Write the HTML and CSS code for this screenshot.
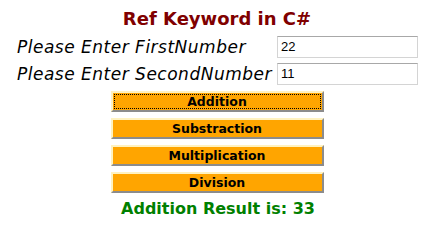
FILE: index.html
```html
<!DOCTYPE html>
<html>
<head>
<meta charset="utf-8">
<link rel="stylesheet" href="styles.css">
</head>
<body>
<div class="page">
  <h1 class="title">Ref Keyword in C#</h1>
  <div class="row">
    <span class="label">Please Enter FirstNumber</span>
    <input class="field" type="text" value="22">
  </div>
  <div class="row">
    <span class="label">Please Enter SecondNumber</span>
    <input class="field" type="text" value="11">
  </div>
  <div class="buttons">
    <button class="btn focused">Addition</button>
    <button class="btn">Substraction</button>
    <button class="btn">Multiplication</button>
    <button class="btn">Division</button>
  </div>
  <div class="result">Addition Result is: 33</div>
</div>
</body>
</html>
```
FILE: styles.css
```css
html, body {
  margin: 0;
  padding: 0;
  background: #ffffff;
}
body {
  font-family: "DejaVu Sans", Verdana, sans-serif;
}
.page {
  width: 418px;
  margin-left: 8px;
  padding-top: 8px;
  display: flex;
  flex-direction: column;
}
.title {
  margin: 0;
  text-align: center;
  font-size: 18px;
  font-weight: bold;
  color: #800000;
  line-height: 22px;
  height: 25px;
}
.row {
  display: flex;
  align-items: center;
  height: 27px;
  padding-left: 9px;
}
.label {
  width: 260px;
  font-style: italic;
  font-size: 17px;
  letter-spacing: 0.5px;
  color: #000;
  white-space: nowrap;
}
.field {
  margin: 0;
  width: 141px;
  height: 22px;
  box-sizing: border-box;
  border: 1px solid #d4d4d4;
  border-top-color: #a8a8a8;
  padding: 1px 3px;
  font-family: "Liberation Sans", Arial, sans-serif;
  font-size: 13px;
  color: #000;
  background: #fff;
}
.buttons {
  display: flex;
  flex-direction: column;
  align-items: center;
  gap: 6px;
  padding-top: 4px;
}
.btn {
  width: 213px;
  height: 21px;
  margin: 0;
  box-sizing: border-box;
  background: #ffa500;
  border: 2px solid;
  border-color: #fff2c0 #8c8c8c #8c8c8c #fff2c0;
  font-family: "DejaVu Sans", Verdana, sans-serif;
  font-weight: bold;
  font-size: 12.5px;
  color: #000;
  padding: 0;
}
.btn.focused {
  outline: 1px dotted #000;
  outline-offset: -4px;
}
.result {
  text-align: center;
  color: #008000;
  font-weight: bold;
  font-size: 16px;
  margin-top: 6px;
  padding-left: 2px;
}
```
